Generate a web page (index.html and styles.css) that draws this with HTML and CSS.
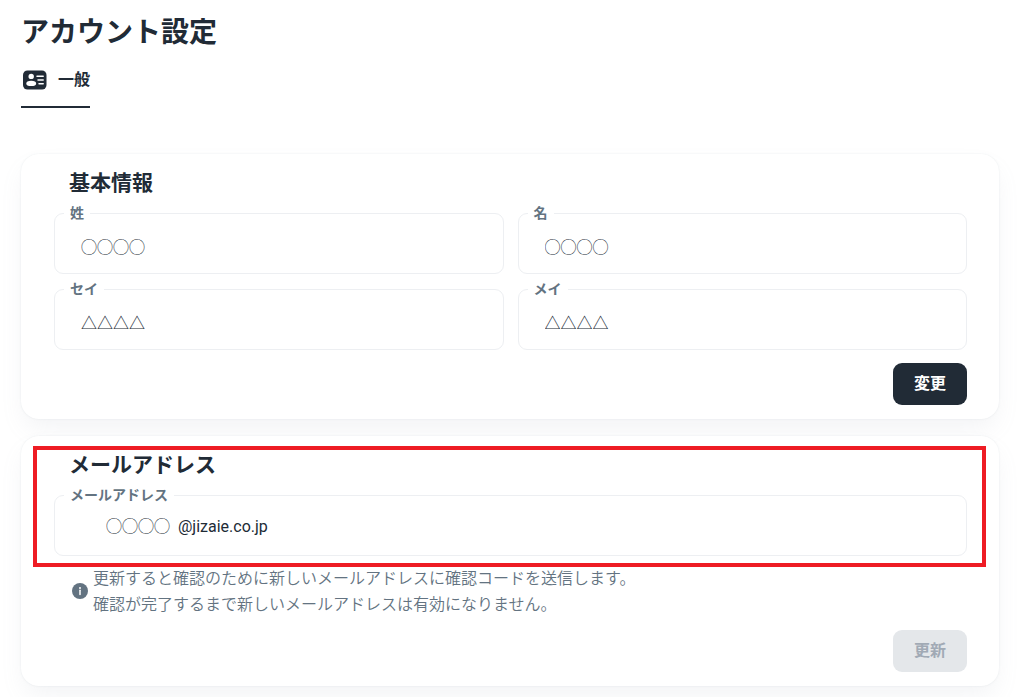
FILE: index.html
```html
<!DOCTYPE html>
<html lang="ja">
<head>
  <meta charset="UTF-8">
  <meta name="viewport" content="width=device-width, initial-scale=1.0">
  <title>アカウント設定</title>
  <link rel="stylesheet" href="styles.css">
</head>
<body>
  <h1>アカウント設定</h1>

  <nav class="tabs">
    <a href="#general" class="tab active">
      <svg class="tab-icon" viewBox="0 0 24 20" aria-hidden="true">
        <rect x="0" y="0.5" width="23.5" height="19" rx="4.5" fill="#212b36"/>
        <circle cx="8.2" cy="6.4" r="2.7" fill="#fff"/>
        <ellipse cx="8.2" cy="13.4" rx="4.9" ry="2.6" fill="#fff"/>
        <path d="M14 6.3h6.2M15 10h5.2M16 13.7h4.2" stroke="#fff" stroke-width="1.5" stroke-linecap="round"/>
      </svg>
      <span>一般</span>
    </a>
  </nav>

  <main id="general">
    <form class="card">
      <h2>基本情報</h2>
      <div class="fields">
        <fieldset>
          <legend><label for="lastName">姓</label></legend>
          <input type="text" id="lastName" value="◯◯◯◯">
        </fieldset>
        <fieldset>
          <legend><label for="firstName">名</label></legend>
          <input type="text" id="firstName" value="◯◯◯◯">
        </fieldset>
        <fieldset>
          <legend><label for="lastKana">セイ</label></legend>
          <input type="text" id="lastKana" value="△△△△">
        </fieldset>
        <fieldset>
          <legend><label for="firstKana">メイ</label></legend>
          <input type="text" id="firstKana" value="△△△△">
        </fieldset>
      </div>
      <div class="actions">
        <button type="button">変更</button>
      </div>
    </form>

    <form class="card">
      <div class="highlight">
        <h2>メールアドレス</h2>
        <fieldset>
          <legend><label for="email">メールアドレス</label></legend>
          <input type="text" id="email" class="email" value="◯◯◯◯  @jizaie.co.jp">
        </fieldset>
      </div>
      <div class="note">
        <svg class="note-icon" viewBox="0 0 16 16" aria-hidden="true">
          <circle cx="8" cy="8" r="8" fill="#637381"/>
          <circle cx="8" cy="4.9" r="1" fill="#fff"/>
          <path d="M8 7.2v4.4" stroke="#fff" stroke-width="1.5" stroke-linecap="round"/>
        </svg>
        <p>更新すると確認のために新しいメールアドレスに確認コードを送信します。<br>確認が完了するまで新しいメールアドレスは有効になりません。</p>
      </div>
      <div class="actions">
        <button type="button" disabled>更新</button>
      </div>
    </form>
  </main>
</body>
</html>
```
FILE: styles.css
```css
* {
  box-sizing: border-box;
}

body {
  margin: 0;
  padding: 12px 25px 11px 21px;
  font-family: Inter, "Noto Sans CJK JP", sans-serif;
  font-size: 16px;
  color: #212b36;
  background-color: #fff;
}

h1 {
  margin: 0;
  font-size: 28px;
  line-height: 40px;
}

h2 {
  margin: 0 0 5px 15px;
  font-size: 21px;
  line-height: 30px;
}

/* タブ */
.tabs {
  display: flex;
  margin-bottom: 46px;
}

.tab {
  display: flex;
  align-items: center;
  gap: 11px;
  height: 56px;
  padding: 2px 0 0 2px;
  color: #212b36;
  font-weight: 600;
  line-height: 20px;
  text-decoration: none;
}

.tab span {
  padding-bottom: 2px;
}

.tab.active {
  border-bottom: 2px solid #212b36;
}

.tab-icon {
  width: 24px;
  height: 20px;
}

/* カード */
.card {
  margin-bottom: 17px;
  padding: 14px 32px 14px 33px;
  border-radius: 18px;
  background-color: #fff;
  box-shadow: 0 0 2px rgba(145, 158, 171, 0.2), 0 12px 24px -4px rgba(145, 158, 171, 0.12);
}

.fields {
  display: grid;
  grid-template-columns: 1fr 1fr;
  gap: 5px 14px;
}

fieldset {
  min-width: 0;
  margin: 0;
  padding: 0;
  border: 1px solid #edeff2;
  border-radius: 9px;
}

legend {
  margin-left: 9px;
  padding: 0 6px;
  color: #637381;
  font-size: 14px;
  font-weight: 600;
  line-height: 20px;
}

legend label {
  display: block;
}

input {
  display: block;
  width: 100%;
  height: 50px;
  padding: 0 26px 5px;
  border: 0;
  outline: 0;
  background: none;
  color: #212b36;
  font-family: Roboto, "Noto Sans CJK JP", sans-serif;
  font-size: 16px;
}

.email {
  padding-bottom: 10px;
  padding-left: 51px;
}

.highlight {
  position: relative;
}

/* 赤枠 */
.highlight::after {
  content: "";
  position: absolute;
  inset: -4px -19px -11px -21px;
  border: 4px solid #ee1c24;
  pointer-events: none;
}

.note {
  display: flex;
  align-items: center;
  gap: 5px;
  margin-top: 9px;
  padding-left: 18px;
  color: #637381;
  font-weight: 350;
  line-height: 26px;
}

.note p {
  margin: 0;
}

.note-icon {
  width: 16px;
  height: 16px;
}

.actions {
  display: flex;
  justify-content: flex-end;
  margin-top: 13px;
}

button {
  width: 74px;
  height: 42px;
  padding: 0 0 4px;
  border: 0;
  border-radius: 9px;
  background-color: #212b36;
  color: #fff;
  font: inherit;
  font-weight: 700;
  cursor: pointer;
}

button:disabled {
  background-color: #e4e7ea;
  color: #a1aab5;
  cursor: default;
}
```
